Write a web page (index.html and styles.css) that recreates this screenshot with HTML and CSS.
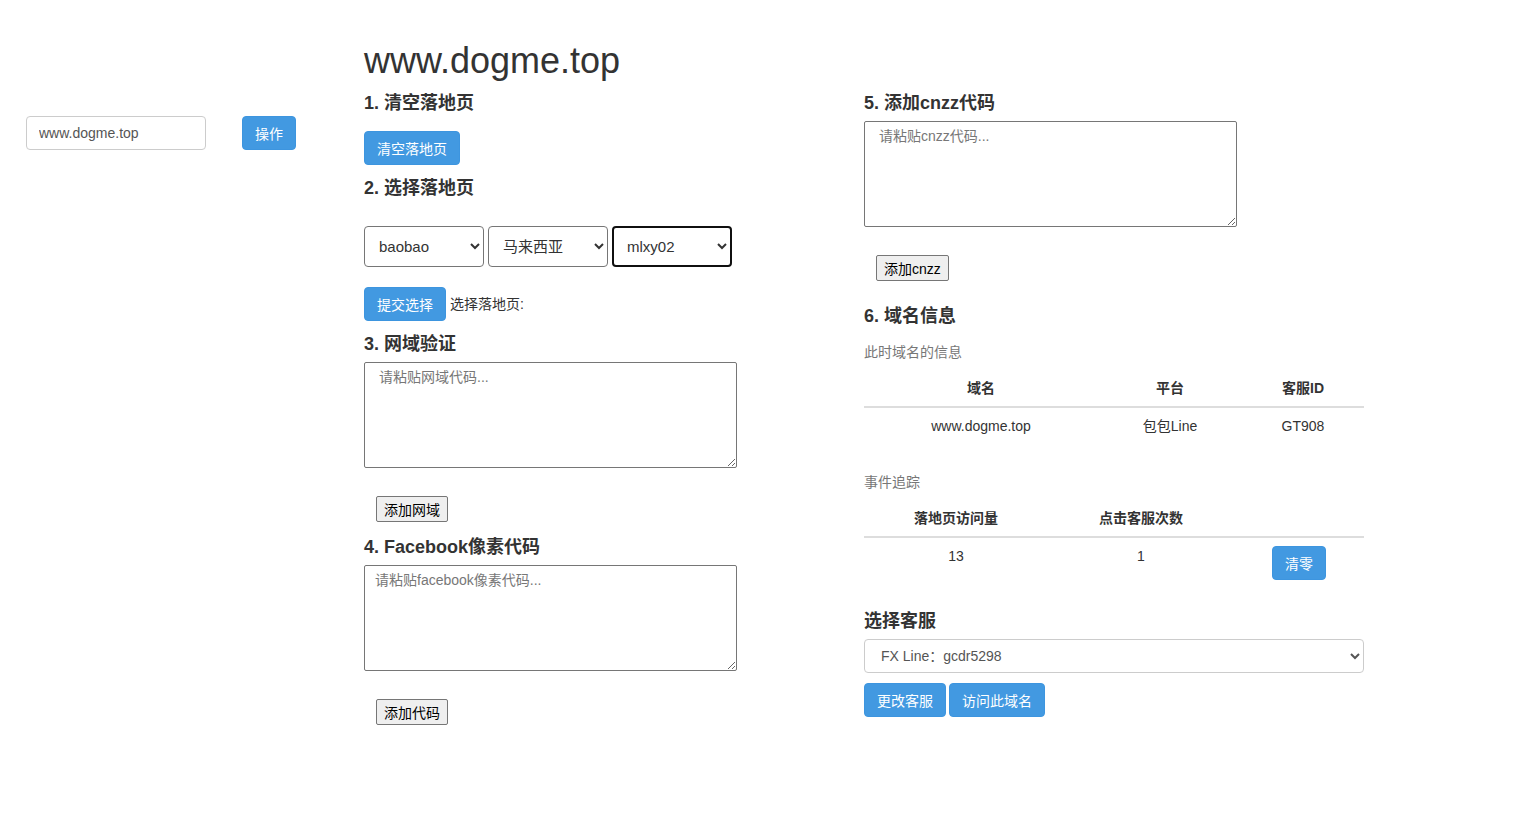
FILE: index.html
```html
<!DOCTYPE html>
<html lang="zh-CN">
<head>
<meta charset="utf-8">
<title>www.dogme.top</title>
<link rel="stylesheet" href="styles.css">
</head>
<body>
<div class="page">
  <aside class="side">
    <input class="domain-input" type="text" value="www.dogme.top">
    <button class="btn btn-blue btn-op">操作</button>
  </aside>

  <main class="col col-mid">
    <h1 class="title">www.dogme.top</h1>

    <h4 class="h4 h-1">1. 清空落地页</h4>
    <button class="btn btn-blue btn-clear">清空落地页</button>

    <h4 class="h4 h-2">2. 选择落地页</h4>
    <div class="select-row">
      <select class="sel"><option>baobao</option></select>
      <select class="sel"><option>马来西亚</option></select>
      <select class="sel sel-focus"><option>mlxy02</option></select>
    </div>
    <div class="submit-row">
      <button class="btn btn-blue btn-submit">提交选择</button>
      <span class="submit-label">选择落地页:</span>
    </div>

    <h4 class="h4 h-3">3. 网域验证</h4>
    <textarea class="ta" placeholder="请粘贴网域代码..."></textarea>
    <button class="btn-plain">添加网域</button>

    <h4 class="h4 h-4">4. Facebook像素代码</h4>
    <textarea class="ta ta-narrow" placeholder="请粘贴facebook像素代码..."></textarea>
    <button class="btn-plain">添加代码</button>
  </main>

  <section class="col col-right">
    <h4 class="h4 h-5">5. 添加cnzz代码</h4>
    <textarea class="ta" placeholder="请粘贴cnzz代码..."></textarea>
    <button class="btn-plain">添加cnzz</button>

    <h4 class="h4 h-6">6. 域名信息</h4>
    <p class="muted">此时域名的信息</p>
    <table class="tbl tbl-info">
      <thead>
        <tr><th class="c1">域名</th><th class="c2">平台</th><th class="c3">客服ID</th></tr>
      </thead>
      <tbody>
        <tr><td>www.dogme.top</td><td>包包Line</td><td>GT908</td></tr>
      </tbody>
    </table>

    <p class="muted muted-2">事件追踪</p>
    <table class="tbl tbl-event">
      <thead>
        <tr><th class="e1">落地页访问量</th><th class="e2">点击客服次数</th><th class="e3"></th></tr>
      </thead>
      <tbody>
        <tr><td>13</td><td>1</td><td><button class="btn btn-blue btn-zero">清零</button></td></tr>
      </tbody>
    </table>

    <h4 class="h4 h-7">选择客服</h4>
    <select class="sel-wide"><option>FX Line：gcdr5298</option></select>
    <div class="btn-row">
      <button class="btn btn-blue btn-change">更改客服</button>
      <button class="btn btn-blue btn-visit">访问此域名</button>
    </div>
  </section>
</div>
</body>
</html>
```

FILE: styles.css
```css
* { box-sizing: border-box; }

html, body {
  margin: 0;
  padding: 0;
  background: #fff;
}

body {
  font-family: "Liberation Sans", Arial, "Noto Sans CJK SC", sans-serif;
  font-size: 14px;
  line-height: 20px;
  color: #333;
}

.page {
  display: flex;
  align-items: flex-start;
}

/* left sidebar */
.side {
  width: 364px;
  flex: none;
  display: flex;
  align-items: center;
  gap: 36px;
  padding: 116px 0 0 26px;
}

.domain-input {
  width: 180px;
  height: 34px;
  border: 1px solid #ccc;
  border-radius: 4px;
  padding: 0 12px;
  font-family: inherit;
  font-size: 14px;
  color: #555;
  outline: none;
}

/* columns */
.col {
  width: 500px;
  flex: none;
  display: flex;
  flex-direction: column;
  align-items: flex-start;
}

.col-mid { padding-top: 41px; }
.col-right { padding-top: 93px; }

.title {
  margin: 0;
  font-size: 36px;
  line-height: 40px;
  font-weight: 500;
  color: #333;
}

.h4 {
  margin: 0;
  font-size: 18px;
  line-height: 20px;
  font-weight: bold;
  color: #333;
}

.h-1 { margin-top: 12px; }
.h-2 { margin-top: 13px; }
.h-3 { margin-top: 13px; }
.h-4 { margin-top: 15px; }
.h-6 { margin-top: 25px; }
.h-7 { margin-top: 23px; }

/* buttons */
.btn {
  height: 34px;
  border: 1px solid #3d95df;
  border-radius: 4px;
  background: #4299e1;
  color: #fff;
  font-family: inherit;
  font-size: 14px;
  padding: 0 12px;
  cursor: pointer;
}

.btn-op { width: 54px; padding: 0; }
.btn-clear { margin-top: 18px; width: 96px; padding: 0; }
.btn-submit { width: 82px; padding: 0; }
.btn-zero { width: 54px; padding: 0; margin-left: 38px; }
.btn-change { width: 82px; padding: 0; }
.btn-visit { width: 96px; padding: 0; }

.btn-plain {
  height: 26px;
  margin: 28px 0 0 12px;
  padding: 0 7px;
  border: 1px solid #767676;
  border-radius: 2px;
  background: #efefef;
  color: #000;
  font-family: inherit;
  font-size: 14px;
}

/* selects */
.select-row {
  display: flex;
  gap: 4px;
  margin-top: 28px;
}

.sel {
  width: 120px;
  height: 41px;
  border: 1px solid #767676;
  border-radius: 4px;
  background: #fff;
  padding: 0 10px;
  font-family: inherit;
  font-size: 15px;
  color: #333;
}

.sel-focus {
  border: 2px solid #101010;
  padding: 0 9px;
}

.submit-row {
  display: flex;
  align-items: center;
  gap: 4px;
  margin-top: 20px;
}

.submit-label { font-size: 14px; color: #333; }

/* textareas */
.ta {
  width: 373px;
  height: 106px;
  margin-top: 8px;
  border: 1px solid #767676;
  border-radius: 2px;
  padding: 4px 14px;
  font-family: inherit;
  font-size: 14px;
  line-height: 20px;
  resize: both;
}

.ta-narrow { padding: 4px 10px; }

.ta::placeholder { color: #777; }

/* text */
.muted {
  margin: 16px 0 0;
  color: #777;
  font-size: 14px;
  line-height: 20px;
}

.muted-2 { margin-top: 28px; }

/* tables */
.tbl {
  width: 500px;
  margin-top: 8px;
  border-collapse: collapse;
}

.tbl th,
.tbl td {
  padding: 8px;
  text-align: center;
  vertical-align: top;
  font-size: 14px;
  line-height: 20px;
  color: #333;
}

.tbl th {
  font-weight: bold;
  border-bottom: 2px solid #ddd;
}

.tbl td { text-align: center; }

.c1 { width: 234px; }
.c2 { width: 144px; }
.c3 { width: 122px; }

.e1 { width: 184px; }
.e2 { width: 186px; }
.e3 { width: 130px; }

.tbl-event td:last-child { text-align: left; padding-left: 0; }

/* customer service select */
.sel-wide {
  width: 500px;
  height: 34px;
  margin-top: 8px;
  border: 1px solid #ccc;
  border-radius: 4px;
  background: #fff;
  padding: 0 12px;
  font-family: inherit;
  font-size: 14px;
  color: #555;
}

.btn-row {
  display: flex;
  gap: 3px;
  margin-top: 10px;
}
```
